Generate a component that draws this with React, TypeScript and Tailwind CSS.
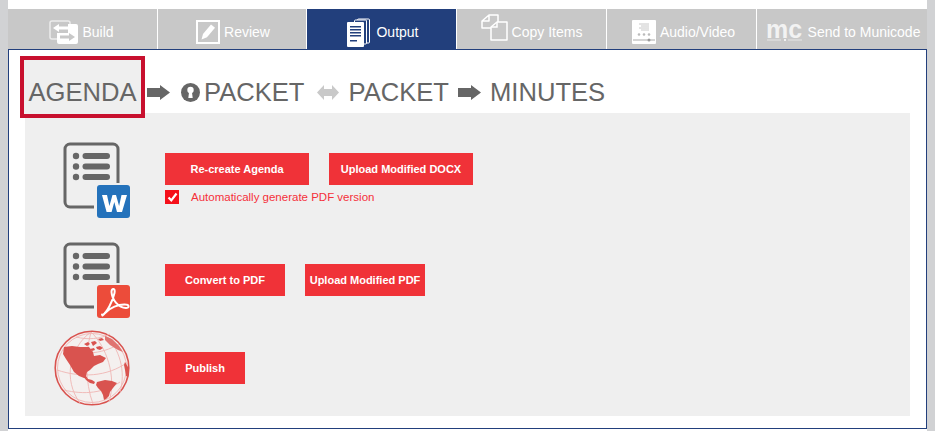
const font = { fontFamily: '"Liberation Sans", Arial, sans-serif' };

function Tab({ label, icon, active, w }: { label: string; icon: React.ReactNode; active?: boolean; w: string }) {
  return (
    <div className={`${w} ${active ? "bg-[#223f7c]" : "bg-[#c8c8c8]"} flex items-center justify-center gap-[4px] text-[14px] text-white h-10 pt-[6px] shrink-0`}>
      {icon}
      <span>{label}</span>
    </div>
  );
}

function BuildIcon() {
  return (
    <svg width="29" height="24" viewBox="0 0 29 24" className="-ml-[2px]">
      <rect x="1" y="1" width="20" height="18" rx="2" fill="none" stroke="#ececec" strokeWidth="1.5" />
      <path d="M19 4h8a2 2 0 0 1 2 2v16a2 2 0 0 1-2 2H10a2 2 0 0 1-2-2v-9h11z" fill="#fff" />
      <path d="M4 8l6-4v2.500h9v3h-9V12z" fill="#fff" />
      <path d="M26 17l-6-4v2.500h-9v3h9V21z" fill="#c8c8c8" />
    </svg>
  );
}
function ReviewIcon() {
  return (
    <svg width="24" height="24" viewBox="0 0 24 24" className="ml-[2px]">
      <rect x="1" y="1" width="22" height="22" fill="none" stroke="#fff" strokeWidth="2" />
      <path d="M5.500 19.500l1.500-5.500L15 4.500l4 3.200-8 9.500z" fill="#fff" />
    </svg>
  );
}
function OutputIcon() {
  return (
    <svg width="23" height="29" viewBox="0 0 23 29" className="ml-[3px] mr-[2px]">
      <rect x="10.500" y="1" width="12" height="24" rx="1" fill="none" stroke="#fff" />
      <rect x="7.500" y="2" width="12" height="24" rx="1" fill="#223f7c" stroke="#fff" />
      <rect x="0" y="4" width="17" height="25" rx="1" fill="#fff" />
      <path d="M3 8h11v1.500H3zM3 11h11v1.500H3zM3 14h11v1.500H3zM3 17h11v1.500H3zM3 22h7v1.500H3z" fill="#223f7c" />
    </svg>
  );
}
function CopyIcon() {
  return (
    <svg width="27" height="28" viewBox="0 0 27 28" className="-mt-[9px]">
      <path d="M8 1h9v13H1V7z M8 1v6H1" fill="none" stroke="#fff" strokeWidth="1.500" strokeLinejoin="round" />
      <path d="M16 8h10v18H10V13z" fill="#c8c8c8" stroke="#fff" strokeWidth="1.500" strokeLinejoin="round" />
      <path d="M16 8v5h-6" fill="none" stroke="#fff" strokeWidth="1.500" />
    </svg>
  );
}
function AvIcon() {
  return (
    <svg width="24" height="24" viewBox="0 0 24 24" className="ml-[4px]">
      <rect width="24" height="24" rx="1" fill="#fff" />
      <path d="M7 4h10M9 6h8M7 8h10M9 10h8" stroke="#c8c8c8" strokeWidth="1" />
      <circle cx="7" cy="14.500" r="1.300" fill="#bbb" />
      <circle cx="12" cy="14.500" r="1.300" fill="#bbb" />
      <circle cx="17" cy="14.500" r="1.300" fill="#bbb" />
      <path d="M1 20h22" stroke="#aaa" />
      <circle cx="17" cy="20" r="1.500" fill="#999" />
    </svg>
  );
}
function McIcon() {
  return (
    <div className="flex flex-col items-center w-[37px] -mt-[1px] ml-[2px] mr-[1px]">
      <span className="text-[#f2f2f2] text-[25px] leading-[16px] font-bold">mc</span>
      <svg width="37" height="4" viewBox="0 0 37 4" className="mt-[1px]">
        <path d="M1 2h14M22 2h14" stroke="#e6e6e6" />
        <circle cx="19" cy="2" r="1" fill="#fff" />
      </svg>
    </div>
  );
}

function Arrow({ color = "#666666" }: { color?: string }) {
  return (
    <svg width="23" height="15" viewBox="0 0 23 15">
      <path d="M0 3h13V0l10 7.500L13 15v-3H0z" fill={color} />
    </svg>
  );
}
function DoubleArrow() {
  return (
    <svg width="22" height="15" viewBox="0 0 22 15">
      <path d="M0 7.500L7 0v4h8V0l7 7.500L15 15v-4H7v4z" fill="#c9c9c9" />
    </svg>
  );
}
function Lock() {
  return (
    <svg width="19" height="19" viewBox="0 0 19 19">
      <circle cx="9.500" cy="9.500" r="9.500" fill="#666666" />
      <circle cx="9.500" cy="7" r="3.200" fill="#fff" />
      <path d="M8.200 8h2.600l.9 7H7.300z" fill="#fff" />
    </svg>
  );
}

function DocIcon({ children }: { children: React.ReactNode }) {
  return (
    <svg width="68" height="77" viewBox="0 0 68 77" className="mt-px">
      <path d="M31 65H7a5 5 0 0 1-5-5V7a5 5 0 0 1 5-5h43a5 5 0 0 1 5 5v34" fill="none" stroke="#666666" strokeWidth="3" />
      <circle cx="13" cy="14" r="3.200" fill="#666666" />
      <circle cx="13" cy="24.500" r="3.200" fill="#666666" />
      <circle cx="13" cy="35" r="3.200" fill="#666666" />
      <rect x="19.500" y="11" width="27.500" height="6" rx="3" fill="#666666" />
      <rect x="19.500" y="21.500" width="27.500" height="6" rx="3" fill="#666666" />
      <rect x="19.500" y="32" width="27.500" height="6" rx="3" fill="#666666" />
      {children}
    </svg>
  );
}

function Globe() {
  return (
    <svg width="76" height="76" viewBox="0 0 76 76">
      <circle cx="38" cy="38" r="36.800" fill="#f4f0ef" stroke="#d9534f" strokeWidth="1.600" />
      <g fill="none" stroke="#efb6b3" strokeWidth="0.900">
        <circle cx="38" cy="38" r="34.500" />
        <path d="M9 20c16 5 38 5 56-6M3 40c24 8 50 7 71-8M10 60c20 5 40 3 56-8M22 7c12 3 24 2 34-3" />
        <path d="M37 2C15 18 9 50 26 73M37 2c-6 22-6 50 2 72M37 2c15 14 26 44 18 70M50 4c16 14 22 38 16 58" />
      </g>
      <path d="M10 17l8-1 8 1 9 0 4 5 1 4 6-1 6 3-3 4-5 2-4 2-4 4-3 2-1 4 2 3-4-1-5-2-5-4-4-7-4-6-3-5z" fill="#d9534f" />
      <path d="M30 47l4 2 4 1 3 2-1 2-4-1-4-3z" fill="#d9534f" />
      <path d="M30 14l4-2 2 2-3 2zM37 12l4-1 2 2-4 3zM42 17l4-1 3 2-3 2-3-1zM36 19l4-1 1 2-3 1zM44 9l4-1 2 2-4 1z" fill="#d9534f" />
      <path d="M51 6l7 3 7 7 4 6-5-2-8-5-5-5z" fill="#e07370" />
      <path d="M43 52l8-2 7 1 5 2-4 5-3 4-1 4-3 3-2 1-1-5-2-4-3-3-2-3z" fill="#d9534f" />
      <path d="M71 32l3 5 1 4-1 6-2-1-1-6-1-5z" fill="#d9534f" />
    </svg>
  );
}

function Btn({ label, w }: { label: string; w: string }) {
  return (
    <div className={`${w} h-8 bg-[#f03238] text-white text-[11px] font-bold flex items-center justify-center whitespace-nowrap`}>
      {label}
    </div>
  );
}

export default function App() {
  return (
    <div className="flex w-[935px] h-[431px] overflow-hidden bg-white" style={font}>
      <div className="w-2 bg-[#d1d2d4] shrink-0" />
      <div className="flex-1 min-w-0 pt-[9px] flex flex-col">
        <div className="flex gap-px">
          <Tab w="w-[149px]" label="Build" icon={<BuildIcon />} />
          <Tab w="w-[148px]" label="Review" icon={<ReviewIcon />} />
          <Tab w="w-[149px]" label="Output" active icon={<OutputIcon />} />
          <Tab w="w-[149px]" label="Copy Items" icon={<CopyIcon />} />
          <Tab w="w-[149px]" label="Audio/Video" icon={<AvIcon />} />
          <Tab w="w-[170px]" label="Send to Municode" icon={<McIcon />} />
        </div>
        <div className="h-[380px] border border-[#223f7c] pt-[6px] pl-[11px] pr-[16px] shrink-0 bg-white">
          <div className="flex items-center h-[62px] text-[25.6px] text-[#666666] relative z-10">
            <div className="w-[125px] h-[62px] border-[4px] border-[#c8102e] bg-[#efefef] flex items-center justify-center pt-[10px] leading-[30px]">AGENDA</div>
            <div className="ml-[2px] mt-[11px] flex"><Arrow /></div>
            <div className="ml-[11px] mt-[11px] flex"><Lock /></div>
            <span className="ml-[4px] pt-[11px]">PACKET</span>
            <div className="ml-[12px] mt-[11px] flex"><DoubleArrow /></div>
            <span className="ml-[10px] pt-[11px]">PACKET</span>
            <div className="ml-[9px] mt-[11px] flex"><Arrow /></div>
            <span className="ml-[9px] pt-[11px]">MINUTES</span>
          </div>
          <div className="ml-[5px] -mt-[5px] h-[303px] bg-[#efefef] flex flex-col pl-[38px] pt-[28px]">
            <div className="flex items-start h-[100px]">
              <div className="w-[68px] shrink-0">
                <DocIcon>
                  <rect x="34" y="43" width="33" height="33" rx="3" fill="#2472bb" />
                  <path d="M39 53h5l2.400 11L49.500 53h3.500l3.100 11L58.500 53H64l-5 17h-5l-2.700-10-2.700 10h-5z" fill="#fff" />
                </DocIcon>
              </div>
              <div className="ml-[34px] pt-3 flex flex-col">
                <div className="flex gap-5">
                  <Btn w="w-[144px]" label="Re-create Agenda" />
                  <Btn w="w-[144px]" label="Upload Modified DOCX" />
                </div>
                <div className="flex items-center mt-[5px] h-[14px] text-[11.5px] text-[#f5303a]">
                  <div className="w-[14px] h-[14px] bg-[#f5101a] flex items-center justify-center">
                    <svg width="11" height="10" viewBox="0 0 11 10"><path d="M1.500 5.500l2.800 2.800L9.500 1.500" fill="none" stroke="#fff" strokeWidth="2.200" /></svg>
                  </div>
                  <span className="ml-[12px] pt-px">Automatically generate PDF version</span>
                </div>
              </div>
            </div>
            <div className="flex items-start h-[101px]">
              <div className="w-[68px] shrink-0">
                <DocIcon>
                  <rect x="34" y="43" width="33" height="33" rx="3" fill="#ec4c3a" />
                  <path d="M39.500 73.500C44 70 49.500 60 51.500 51c1-5-3-5.500-3-1 .5 8 7 15.500 14.500 16 3.500 0 3.500-3.500-.5-3.500-6.500-.5-16 3-21 9-1.500 1.500-2.500 1.500-2.500 1z" fill="none" stroke="#fff" strokeWidth="2" strokeLinejoin="round" />
                </DocIcon>
              </div>
              <div className="ml-[34px] pt-[23px] flex gap-5">
                <Btn w="w-[120px]" label="Convert to PDF" />
                <Btn w="w-[120px]" label="Upload Modified PDF" />
              </div>
            </div>
            <div className="flex items-start">
              <div className="w-[76px] -ml-[9px] -mt-[12px] shrink-0"><Globe /></div>
              <div className="ml-[35px] pt-[10px]">
                <Btn w="w-20" label="Publish" />
              </div>
            </div>
          </div>
        </div>
      </div>
      <div className="w-2 bg-[#d1d2d4] shrink-0" />
    </div>
  );
}
